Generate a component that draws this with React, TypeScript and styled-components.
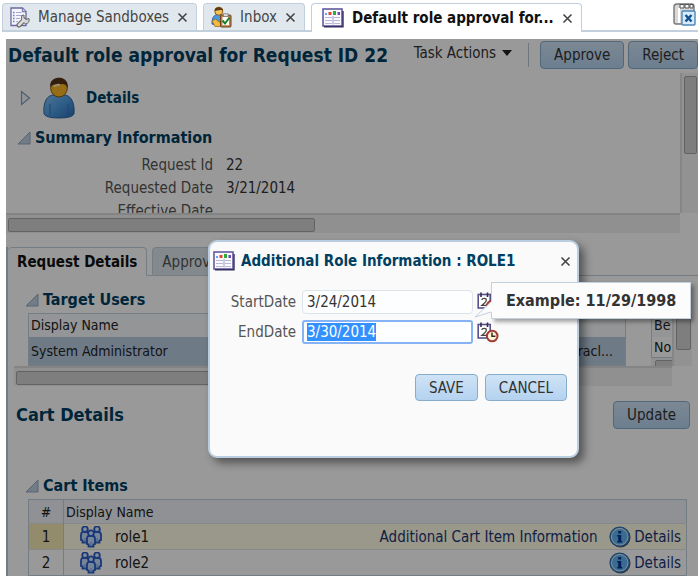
import React, { useEffect, useId, useRef } from "react";
import styled, { createGlobalStyle } from "styled-components";

const GlobalStyle = createGlobalStyle`
  * { box-sizing: border-box; }
  body {
    margin: 0;
    background: #fff;
    color: #333;
    font-family: "DejaVu Sans Condensed", "DejaVu Sans", Tahoma, sans-serif;
    font-size: 15px;
    line-height: 20px;
  }
  button, input { font: inherit; color: inherit; }
  h1, h2, h3, dl, dd { margin: 0; }
  ::selection { background: #3390ff; color: #fff; }
`;

const navy = "#003f61";
const line = "#c2cfdc";

/* ---------- layout ---------- */

const Page = styled.div`
  padding: 3px 2px 0 0;
`;

const TabBar = styled.nav`
  display: flex;
  height: 29px;
  padding-left: 2px;
`;

const TabGap = styled.div<{ $grow?: boolean }>`
  width: 6px;
  flex: ${(p) => (p.$grow ? "1" : "none")};
  padding-right: ${(p) => (p.$grow ? 2 : 0)}px;
  border-bottom: 2px solid ${line};
  text-align: right;
`;

const PageTab = styled.div<{ $active?: boolean }>`
  display: flex;
  align-items: center;
  gap: 8px;
  padding: 0 8px 0 ${(p) => (p.$active ? 10 : 7)}px;
  border: 1px solid ${line};
  border-bottom: ${(p) => (p.$active ? "0" : `2px solid ${line}`)};
  border-radius: 4px 4px 0 0;
  background: ${(p) => (p.$active ? "#fff" : "#e1e8ed")};
  color: ${(p) => (p.$active ? "#111" : "#454545")};
  font-weight: ${(p) => (p.$active ? "bold" : "normal")};
  white-space: nowrap;
`;

const TabLink = styled.a`
  color: inherit;
  text-decoration: none;
`;

const IconButton = styled.button`
  display: inline-flex;
  align-items: center;
  justify-content: center;
  padding: 0;
  border: 0;
  background: none;
  cursor: pointer;
`;

const Stage = styled.main`
  position: relative;
  margin: 7px 0 0 6px;
  overflow: hidden;
`;

const TitleBar = styled.header`
  display: flex;
  align-items: center;
  height: 34px;
  padding: 0 0 2px 2px;
  white-space: nowrap;
`;

const Heading = styled.h1`
  flex: 1;
  color: ${navy};
  font-size: 19px;
  line-height: 24px;
`;

const MenuButton = styled.button`
  display: flex;
  align-items: center;
  gap: 6px;
  margin-right: 11px;
  padding: 0 16px 4px 0;
  border: 0;
  border-right: 1px solid #b8c5d2;
  background: none;
`;

const PushButton = styled.button`
  height: 28px;
  padding: 0 13px;
  border: 1px solid #86adcc;
  border-radius: 4px;
  background: linear-gradient(#cfe3f5, #b4d2f0);
  color: #333;
`;

const ButtonPair = styled.div<{ $gap: number }>`
  display: flex;
  gap: ${(p) => p.$gap}px;
`;

const ScrollFrame = styled.section<{ $edge: number }>`
  display: grid;
  grid-template-columns: minmax(0, 1fr) ${(p) => p.$edge}px;
`;

const ScrollBody = styled.div<{ $h: number }>`
  height: ${(p) => p.$h}px;
  overflow: hidden;
`;

const VTrack = styled.div`
  padding: 3px 1px 0 2px;
  border-left: 2px solid #e0e0e0;
  background: #f3f3f3;
`;

const HTrack = styled.div`
  height: 20px;
  padding: 3px 2px;
  border-top: 2px solid #dcdcdc;
  background: #f0f0f0;
`;

const Thumb = styled.div<{ $w?: string; $h?: number }>`
  width: ${(p) => p.$w ?? "100%"};
  height: ${(p) => p.$h ?? 14}px;
  border: 1px solid #a6a6a6;
  border-radius: 2px;
  background: #d3d3d3;
`;

const PersonRow = styled.div`
  display: flex;
  align-items: center;
  gap: 11px;
  height: 52px;
  padding: 0 0 2px 14px;
  color: ${navy};
  font-weight: bold;
`;

const SectionTitle = styled.h3<{ $indent: number }>`
  display: flex;
  align-items: center;
  gap: 4px;
  height: 26px;
  padding-left: ${(p) => p.$indent}px;
  color: ${navy};
  font-size: 16px;
  white-space: nowrap;
`;

const Facts = styled.dl`
  display: grid;
  grid-template-columns: 207px 1fr;
  column-gap: 13px;
  padding-top: 3px;
  line-height: 23px;
  dt { color: #555; text-align: right; }
`;

const Lower = styled.div`
  margin-top: 14px;
  border-left: 2px solid ${line};
`;

const SubTabs = styled.div`
  display: flex;
  height: 29px;
`;

const SubTab = styled.button<{ $active?: boolean }>`
  padding: 0 9px;
  border: 1px solid ${line};
  border-left-width: ${(p) => (p.$active ? 0 : 1)}px;
  border-bottom-color: ${(p) => (p.$active ? "#fff" : line)};
  border-radius: 4px 4px 0 0;
  background: ${(p) => (p.$active ? "#fff" : "#dde5eb")};
  color: ${(p) => (p.$active ? "#111" : "#555")};
  font-weight: ${(p) => (p.$active ? "bold" : "normal")};
`;

const SubGap = styled.div<{ $grow?: boolean }>`
  width: 5px;
  flex: ${(p) => (p.$grow ? "1" : "none")};
  border-bottom: 1px solid ${line};
`;

const UsersBlock = styled.div`
  padding: 11px 6px 0 6px;
`;

const UsersSplit = styled.div`
  display: grid;
  grid-template-columns: minmax(0, 1fr) 21px;
  column-gap: 25px;
  height: 53px;
  padding-left: 14px;
  overflow: hidden;
`;

const Grid = styled.table`
  width: 100%;
  border-collapse: collapse;
  border: 1px solid ${line};
  color: #222;
  font-size: 14px;
  white-space: nowrap;
  th { font-weight: normal; text-align: left; }
  th, td { padding: 0 2px; }
`;

const UsersGrid = styled(Grid)`
  thead tr { height: 23px; background: #f5f8fb; }
  tbody tr { height: 25px; background: #b8cce0; }
  td:last-child { padding-right: 12px; text-align: right; }
`;

const SidePane = styled.div`
  overflow: hidden;
`;

const SideGrid = styled(Grid)`
  width: 60px;
  thead tr { height: 23px; background: #f5f8fb; }
  tbody tr { height: 21px; }
`;

const SideTrack = styled.div`
  width: 60px;
  padding: 2px 4px 0;
  background: #f0f0f0;
`;

const CartHeader = styled.div`
  display: flex;
  align-items: center;
  justify-content: space-between;
  height: 58px;
  padding: 0 8px;
`;

const CartHeading = styled.h2`
  color: ${navy};
  font-size: 18px;
`;

const CartBlock = styled.div`
  padding: 29px 11px 0 20px;
`;

const CartTitle = styled(SectionTitle)`
  margin-left: -3px;
`;

const CartGrid = styled(Grid)`
  thead tr { height: 24px; background: #eef2f9; }
  tbody tr { height: 26px; border-top: 1px solid #e0e5ea; }
  th:first-child, td:first-child {
    width: 35px;
    border-right: 1px solid ${line};
    text-align: center;
  }
  td { font-size: 15px; }
  td:last-child { width: 84px; }
`;

const CartRow = styled.tr<{ $selected?: boolean }>`
  background: ${(p) => (p.$selected ? "#fffde6" : "#fff")};
  td:first-child { background: ${(p) => (p.$selected ? "#f5e9b4" : "#fff")}; }
`;

const RoleCell = styled.div`
  display: flex;
  align-items: center;
  gap: 13px;
  padding-left: 14px;
`;

const InfoCell = styled.td`
  text-align: right;
`;

const CellLink = styled.a`
  display: flex;
  align-items: center;
  justify-content: flex-end;
  gap: 3px;
  padding-right: 3px;
  color: #1b3674;
  text-decoration: none;
`;

/* ---------- dialog ---------- */

const Backdrop = styled.div`
  position: absolute;
  inset: 0;
  background: rgba(0, 0, 0, 0.4);
`;

const Dialog = styled.section`
  position: absolute;
  top: 201px;
  left: 202px;
  width: 371px;
  min-height: 218px;
  border: 2px solid #b9cde0;
  border-radius: 9px;
  background: #fafafa;
  box-shadow: 5px 5px 8px rgba(0, 0, 0, 0.45);
`;

const DialogHead = styled.div`
  display: flex;
  align-items: center;
  gap: 6px;
  height: 38px;
  padding: 0 6px 0 3px;
`;

const DialogTitle = styled.h2`
  flex: 1;
  color: ${navy};
  font-size: 15px;
`;

const Field = styled.div`
  position: relative;
  display: flex;
  align-items: center;
  height: 30px;
`;

const FieldLabel = styled.label`
  width: 86px;
  margin-right: 6px;
  color: #555;
  text-align: right;
`;

const DateInput = styled.input`
  width: 171px;
  height: 24px;
  margin-right: 4px;
  padding: 0 4px;
  border: 1px solid #dce4ea;
  border-radius: 4px;
  background: #fcfeff;
  color: #333;
  outline: none;
  &:focus { border: 2px solid #85b3f5; border-radius: 3px; padding: 0 3px; }
`;

const Fields = styled.div`
  padding-top: 7px;
`;

const Actions = styled.div`
  display: flex;
  justify-content: flex-end;
  gap: 7px;
  padding: 27px 10px 0 0;
`;

const DialogButton = styled(PushButton)`
  height: 27px;
`;

const Hint = styled.div`
  position: absolute;
  z-index: 1;
  bottom: 28px;
  left: 281px;
  padding: 8px 14px 7px;
  border: 1px solid #c3d0de;
  background: #fcfcfc;
  box-shadow: 3px 3px 4px rgba(0, 0, 0, 0.35);
  font-size: 16px;
  font-weight: bold;
  white-space: nowrap;
`;

const HintTail = styled.svg`
  position: absolute;
  bottom: 0;
  left: -18px;
`;

/* ---------- icons ---------- */

const Cross = () => (
  <svg width="11" height="11" viewBox="0 0 11 11" aria-hidden="true">
    <path d="M1.5 1.5 9.5 9.5M9.5 1.5 1.5 9.5" stroke="#444" strokeWidth="1.6" />
  </svg>
);

const Expanded = () => (
  <svg width="14" height="14" viewBox="0 0 14 14" aria-hidden="true">
    <path d="M13 1V13H1Z" fill="#bdcfdf" stroke="#91a9bf" />
  </svg>
);

const Collapsed = () => (
  <svg width="12" height="16" viewBox="0 0 12 16" aria-hidden="true">
    <path d="M1.5 1.5 9.5 8 1.5 14.5Z" fill="#f0f5fa" stroke="#7d9fc0" strokeWidth="1.2" />
  </svg>
);

const SandboxIcon = () => (
  <svg width="20" height="21" viewBox="0 0 20 21" aria-hidden="true">
    <path d="M1 1H12.5L16 4.5V18.5H1Z" fill="#f5f5fd" stroke="#69699f" strokeWidth="1.3" />
    <path d="M12.3 1V4.8H16" fill="#c8c8e5" stroke="#69699f" />
    <path d="M3 5.5H4.5M3 8.5H4.5M3 11.5H4.5M3 14.5H4.5" stroke="#5a7dd0" strokeWidth="1.4" />
    <path d="M6 5.5H11.5M6 8.5H13M6 11.5H10M6 14.5H8" stroke="#a5a9d2" />
    <path d="M9 18 14 13" stroke="#666" strokeWidth="5" strokeLinecap="round" />
    <path d="M11.8 8.5 14 8V11L16 12.5 19 11.5Q20 16 15.5 17L12.5 14.5Q10.5 11.5 11.8 8.5Z" fill="#d4d4d8" stroke="#666" />
    <path d="M9 18 14 13" stroke="#ddd" strokeWidth="2.8" strokeLinecap="round" />
  </svg>
);

const InboxIcon = () => (
  <svg width="21" height="22" viewBox="0 0 21 22" aria-hidden="true">
    <path d="M1 18C1 11 3 8.5 7.5 8.5S14 11 14 18Q7 21 1 18Z" fill="#4a98dc" stroke="#2867a6" />
    <path d="M1 15 4 20.5H9.5V17L4.5 13Z" fill="#f5b93c" stroke="#8c5b18" strokeWidth=".7" />
    <circle cx="7.8" cy="5.2" r="4" fill="#f6c55a" stroke="#8c5b18" />
    <path d="M3.6 5C3.2 0 12.2 0 12 5 10.2 2.8 6.2 4.5 3.6 5Z" fill="#603910" />
    <rect x="9.5" y="9" width="10.5" height="12" rx="1" fill="#b9824a" stroke="#6d421c" />
    <rect x="11.5" y="11" width="6.5" height="8.2" fill="#fff" />
    <rect x="12.5" y="7.8" width="4.5" height="2.6" fill="#ddd" stroke="#777" strokeWidth=".7" />
    <path d="M11.5 14.5 14 17.5 18.5 11.5" fill="none" stroke="#198224" strokeWidth="2" />
  </svg>
);

const ReportIcon = () => (
  <svg width="22" height="20" viewBox="0 0 22 20" aria-hidden="true">
    <rect x="1" y="1" width="19" height="17" fill="#f9f9ff" stroke="#625b9e" strokeWidth="1.6" />
    <path d="M2 18.8H21V3" fill="none" stroke="#343061" strokeWidth="1.4" />
    <path d="M3 6H5" stroke="#63a6ff" strokeWidth="2" />
    <path d="M6.5 5.5H9.5" stroke="#e5472f" strokeWidth="3" />
    <path d="M11 5H14" stroke="#2aaf35" strokeWidth="4" />
    <path d="M15.5 5.5H18" stroke="#7447c5" strokeWidth="3" />
    <path d="M3 9.5H10M3 12.5H10M3 15.5H10M12 9.5H18M12 12.5H18M12 15.5H18" stroke="#b9b7d8" />
    <path d="M11 8V16.5" stroke="#a09cc8" />
  </svg>
);

const CloseAllIcon = () => (
  <svg width="23" height="23" viewBox="0 0 23 23" aria-hidden="true">
    <path d="M1 4Q1 1 4 1H19Q21 1 21 4V21H3Q1 21 1 19Z" fill="#d8d8d8" stroke="#777" strokeWidth="1.4" />
    <path d="M6 5V20" stroke="#fff" strokeWidth="2" />
    <path d="M7 1.5H11V5H7ZM12 1.5H16V5H12ZM17 1.5H20V5H17Z" fill="#f7f7f7" stroke="#555" />
    <rect x="9" y="8" width="13" height="14" rx="1" fill="#d8ebfb" stroke="#4b87b8" strokeWidth="1.4" />
    <path d="M12.5 12 18.5 18.5M18.5 12 12.5 18.5" stroke="#145190" strokeWidth="2.5" />
  </svg>
);

const PersonIcon = () => (
  <svg width="32" height="42" viewBox="0 0 32 42" aria-hidden="true">
    <defs>
      <linearGradient id="shirt" x2="1" y2="1">
        <stop stopColor="#85c3f7" />
        <stop offset=".5" stopColor="#4e9de2" />
        <stop offset="1" stopColor="#286bb4" />
      </linearGradient>
    </defs>
    <path d="M1 37C0 25 4 18 11 18H21C28 18 32 26 31 37Q29 41 16 41T1 37Z" fill="url(#shirt)" stroke="#2d68a2" />
    <path d="M7 27V38M25 27V38" stroke="#2e74b8" />
    <ellipse cx="16" cy="11" rx="8.3" ry="9" fill="#f7b625" stroke="#8b570e" />
    <path d="M7.4 10C5-2 27-3 24.6 11 22 5 17 7 14.5 8.5 12 6.5 9 7.5 7.4 10Z" fill="#553317" />
    <path d="M11 9.5Q14 7 17 8" fill="none" stroke="#fff2b0" strokeWidth="2" />
  </svg>
);

const Figure = ({ x, y }: { x: number; y: number }) => (
  <g transform={`translate(${x} ${y})`}>
    <path d="M-4 9Q-4 5.5 0 5.5T4 9V14L2.5 14.5V16.5H-2.5V14.5L-4 14Z" fill="#c4dcff" stroke="#2a5cc8" strokeWidth="1.8" />
    <path d="M0 12V16.5" stroke="#6f9be6" />
    <circle cx="0" cy="3.2" r="2.8" fill="#d8e8ff" stroke="#2a5cc8" strokeWidth="1.8" />
  </g>
);

const GroupIcon = () => (
  <svg width="22" height="22" viewBox="0 0 22 22" aria-hidden="true">
    <Figure x={5} y={0} />
    <Figure x={17} y={0} />
    <Figure x={11} y={4} />
  </svg>
);

const InfoIcon = () => (
  <svg width="22" height="22" viewBox="0 0 22 22" aria-hidden="true">
    <circle cx="11.5" cy="11.5" r="10" fill="#4b5560" />
    <circle cx="10.7" cy="10.7" r="9.6" fill="#cfe6fb" stroke="#2f6fb4" strokeWidth="1.4" />
    <circle cx="10.7" cy="10.7" r="7.7" fill="#62b2f2" />
    <path d="M9.2 5H12.2V7.5H9.2ZM8.2 9H12.2V15H13.2V16.5H8.2V15H9.2V10.5H8.2Z" fill="#07358f" />
  </svg>
);

const CalendarIcon = () => (
  <svg width="22" height="21" viewBox="0 0 22 21" aria-hidden="true">
    <rect x="1.2" y="2.5" width="12" height="13.5" fill="#fff" stroke="#57518f" strokeWidth="1.6" />
    <path d="M4 .5V5M10.5 .5V5" stroke="#34314f" strokeWidth="1.6" />
    <path d="M4.8 8Q5 6.3 7.2 6.3T9.3 8.3Q9.3 9.8 5 13.3H10" fill="none" stroke="#444" strokeWidth="1.3" />
    <circle cx="15.2" cy="14" r="5.3" fill="#fff6d9" stroke="#a13b34" strokeWidth="2" />
    <path d="M15 10.5V14.3H18.5" fill="none" stroke="#3b2c22" strokeWidth="1.5" />
  </svg>
);

const DownArrow = () => (
  <svg width="10" height="6" viewBox="0 0 10 6" aria-hidden="true">
    <path d="M0 0H10L5 6Z" fill="#222" />
  </svg>
);

/* ---------- page ---------- */

const openPages = [
  { label: "Manage Sandboxes", icon: <SandboxIcon /> },
  { label: "Inbox", icon: <InboxIcon /> },
  { label: "Default role approval for...", icon: <ReportIcon />, active: true },
];

const cartItems = [
  { name: "role1", info: "Additional Cart Item Information", selected: true },
  { name: "role2", info: "" },
];

function RoleDialog() {
  const id = useId();
  const endDate = useRef<HTMLInputElement>(null);

  useEffect(() => {
    endDate.current?.focus();
    endDate.current?.select();
  }, []);

  return (
    <Dialog role="dialog" aria-labelledby={`${id}-title`}>
      <DialogHead>
        <ReportIcon />
        <DialogTitle id={`${id}-title`}>Additional Role Information : ROLE1</DialogTitle>
        <IconButton aria-label="Close dialog"><Cross /></IconButton>
      </DialogHead>
      <Fields>
        <Field>
          <FieldLabel htmlFor={`${id}-start`}>StartDate</FieldLabel>
          <DateInput id={`${id}-start`} defaultValue="3/24/2014" />
          <IconButton aria-label="Pick start date"><CalendarIcon /></IconButton>
        </Field>
        <Field>
          <FieldLabel htmlFor={`${id}-end`}>EndDate</FieldLabel>
          <DateInput id={`${id}-end`} ref={endDate} defaultValue="3/30/2014" aria-describedby={`${id}-hint`} />
          <IconButton aria-label="Pick end date"><CalendarIcon /></IconButton>
          <Hint id={`${id}-hint`} role="tooltip">
            <HintTail width="18" height="18" viewBox="0 0 18 18" aria-hidden="true">
              <path d="M18 1 1 17 18 12Z" fill="#fcfcfc" />
              <path d="M17 2 1 17 17 12" fill="none" stroke="#c3d0de" />
            </HintTail>
            Example: 11/29/1998
          </Hint>
        </Field>
      </Fields>
      <Actions>
        <DialogButton>SAVE</DialogButton>
        <DialogButton>CANCEL</DialogButton>
      </Actions>
    </Dialog>
  );
}

export default function App() {
  return (
    <Page>
      <GlobalStyle />
      <TabBar>
        {openPages.map((page, i) => (
          <React.Fragment key={page.label}>
            {i > 0 && <TabGap />}
            <PageTab $active={page.active}>
              {page.icon}
              <TabLink href="#">{page.label}</TabLink>
              <IconButton aria-label={`Close ${page.label}`}><Cross /></IconButton>
            </PageTab>
          </React.Fragment>
        ))}
        <TabGap $grow>
          <IconButton aria-label="Close tabs"><CloseAllIcon /></IconButton>
        </TabGap>
      </TabBar>

      <Stage>
        <TitleBar>
          <Heading>Default role approval for Request ID 22</Heading>
          <MenuButton>Task Actions <DownArrow /></MenuButton>
          <ButtonPair $gap={4}>
            <PushButton>Approve</PushButton>
            <PushButton>Reject</PushButton>
          </ButtonPair>
        </TitleBar>

        <ScrollFrame $edge={18}>
          <ScrollBody $h={140}>
            <PersonRow>
              <Collapsed />
              <PersonIcon />
              Details
            </PersonRow>
            <SectionTitle $indent={11}><Expanded />Summary Information</SectionTitle>
            <Facts>
              <dt>Request Id</dt><dd>22</dd>
              <dt>Requested Date</dt><dd>3/21/2014</dd>
              <dt>Effective Date</dt><dd />
            </Facts>
          </ScrollBody>
          <VTrack><Thumb $h={78} /></VTrack>
          <HTrack><Thumb $w="307px" /></HTrack>
        </ScrollFrame>

        <Lower>
          <SubTabs>
            <SubTab $active>Request Details</SubTab>
            <SubGap />
            <SubTab>Approvals</SubTab>
            <SubGap $grow />
          </SubTabs>

          <UsersBlock>
            <SectionTitle $indent={11}><Expanded />Target Users</SectionTitle>
            <ScrollFrame $edge={20}>
              <UsersSplit>
                <UsersGrid>
                  <thead><tr><th>Display Name</th><th /></tr></thead>
                  <tbody><tr><td>System Administrator</td><td>Oracl...</td></tr></tbody>
                </UsersGrid>
                <SidePane>
                  <SideGrid>
                    <thead><tr><th>Be</th></tr></thead>
                    <tbody><tr><td>No</td></tr></tbody>
                  </SideGrid>
                  <SideTrack><Thumb /></SideTrack>
                </SidePane>
              </UsersSplit>
              <VTrack><Thumb $h={34} /></VTrack>
              <HTrack><Thumb $w="500px" /></HTrack>
            </ScrollFrame>
          </UsersBlock>

          <CartHeader>
            <CartHeading>Cart Details</CartHeading>
            <PushButton>Update</PushButton>
          </CartHeader>

          <CartBlock>
            <CartTitle $indent={0}><Expanded />Cart Items</CartTitle>
            <CartGrid>
              <thead>
                <tr><th>#</th><th>Display Name</th><th /><th /></tr>
              </thead>
              <tbody>
                {cartItems.map((item, i) => (
                  <CartRow key={item.name} $selected={item.selected}>
                    <td>{i + 1}</td>
                    <td><RoleCell><GroupIcon />{item.name}</RoleCell></td>
                    <InfoCell>{item.info && <CellLink href="#">{item.info}</CellLink>}</InfoCell>
                    <td><CellLink href="#"><InfoIcon />Details</CellLink></td>
                  </CartRow>
                ))}
              </tbody>
            </CartGrid>
          </CartBlock>
        </Lower>

        <Backdrop />
        <RoleDialog />
      </Stage>
    </Page>
  );
}
